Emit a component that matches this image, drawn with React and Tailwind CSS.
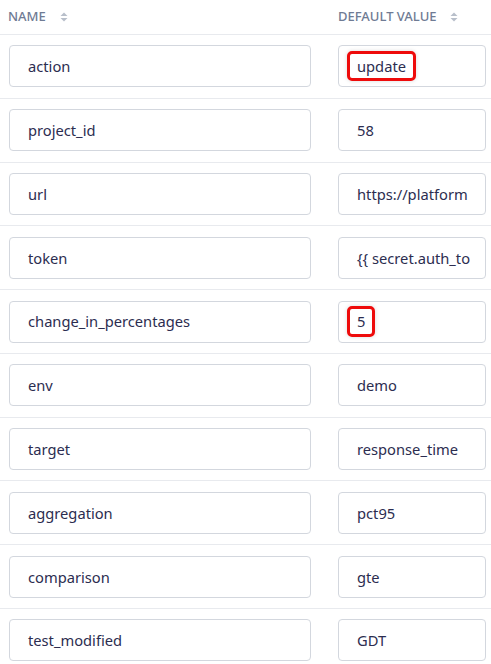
const rows = [
  ['action', 'update', true],
  ['project_id', '58'],
  ['url', 'https://platform'],
  ['token', '{{ secret.auth_to'],
  ['change_in_percentages', '5', true],
  ['env', 'demo'],
  ['target', 'response_time'],
  ['aggregation', 'pct95'],
  ['comparison', 'gte'],
  ['test_modified', 'GDT'],
];

function SortIcon() {
  return (
    <svg width="8" height="10" viewBox="0 0 8 10" className="ml-[14px] text-[#b8bfca]">
      <path d="M4 0.5 L7.5 4 H0.5 Z" fill="currentColor" />
      <path d="M4 9.5 L7.5 6 H0.5 Z" fill="currentColor" />
    </svg>
  );
}

export default function App() {
  return (
    <div className="w-[491px] h-[664px] overflow-hidden bg-white font-['Noto_Sans',sans-serif] text-[#2c2d50]">
      <div className="flex h-[35px] items-center border-b border-[#e8eaee] text-[13px] font-medium uppercase text-[#6f7b94]">
        <div className="flex w-[330px] items-center pl-[8px]">
          NAME <SortIcon />
        </div>
        <div className="flex items-center pl-[8px]">
          DEFAULT VALUE <SortIcon />
        </div>
      </div>
      {rows.map(([name, value, hl], i) => (
        <div
          key={name}
          className={`flex items-center py-[10.4px] ${i > 0 ? 'border-t border-[#e8eaee]' : ''}`}
        >
          <div className="ml-[9px] flex h-[42px] w-[302px] items-center rounded-[4px] border border-[#d3d7de] pl-[18px] text-[14.7px]">
            {name}
          </div>
          <div className="ml-[27px] flex h-[42px] w-[148px] items-center overflow-hidden whitespace-nowrap rounded-[4px] border border-[#d3d7de] pl-[18px] text-[14.7px]">
            {hl ? (
              <span className="-ml-[10px] rounded-[5px] border-[3px] border-[#ee0b0b] px-[7px] py-[1px] shadow-[0_0_4px_rgba(0,0,0,0.15)]">
                {value}
              </span>
            ) : (
              value
            )}
          </div>
        </div>
      ))}
    </div>
  );
}
